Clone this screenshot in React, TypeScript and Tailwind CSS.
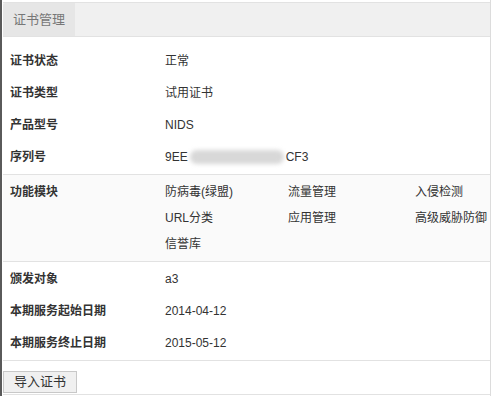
import React from 'react'

const font = { fontFamily: '"Liberation Sans", "Noto Sans CJK SC", sans-serif' }

function Row({ label, children }: { label: string; children: React.ReactNode }) {
  return (
    <div className="flex h-[32px] items-center">
      <div className="w-[162px] pl-[7px] font-bold text-[#333]">{label}</div>
      <div className="text-[#333]">{children}</div>
    </div>
  )
}

const modules = ['防病毒(绿盟)', '流量管理', '入侵检测', 'URL分类', '应用管理', '高级威胁防御', '信誉库']

export default function App() {
  return (
    <div className="flex h-[396px] w-[491px] bg-white text-[12px]" style={font}>
      <div className="w-[2px] bg-[#5a5a5a]" />
      <div className="ml-[1px] flex flex-1 flex-col border-r border-[#dcdcdc]">
        <div className="mt-[2px] flex h-[35px] border-y border-[#e2e2e2] bg-[#f0f0f0]">
          <div className="flex items-center rounded-tl-[3px] bg-[#e6e6e6] px-[10px] text-[13px] text-[#777]">
            证书管理
          </div>
        </div>
        <div className="pt-[8px]">
          <Row label="证书状态">正常</Row>
          <Row label="证书类型">试用证书</Row>
          <Row label="产品型号">NIDS</Row>
          <Row label="序列号">
            <span className="flex items-center">
              9EE
              <span className="mx-[2px] h-[14px] w-[94px] rounded-full bg-[#d8d8d8] blur-[2px]" />
              CF3
            </span>
          </Row>
        </div>
        <div className="mt-[1px] flex border-y border-[#e2e2e2] bg-[#fafafa] pt-[8px] pb-[7px]">
          <div className="w-[162px] pl-[7px] font-bold text-[#333]">功能模块</div>
          <div className="grid flex-1 grid-cols-[123px_127px_1fr] gap-y-[7px] text-[#333]">
            {modules.map((m) => (
              <div key={m} className="h-[19px]">
                {m}
              </div>
            ))}
          </div>
        </div>
        <div className="pt-[1px]">
          <Row label="颁发对象">a3</Row>
          <Row label="本期服务起始日期">2014-04-12</Row>
          <Row label="本期服务终止日期">2015-05-12</Row>
        </div>
        <div className="mt-[1px] flex-1 border-y border-[#e2e2e2] pt-[10px]">
          <button className="h-[22px] w-[74px] border border-[#c8c8c8] bg-[#f0f0f0] text-[13px] text-[#333]">
            导入证书
          </button>
        </div>
        <div className="h-[1px]" />
      </div>
    </div>
  )
}
